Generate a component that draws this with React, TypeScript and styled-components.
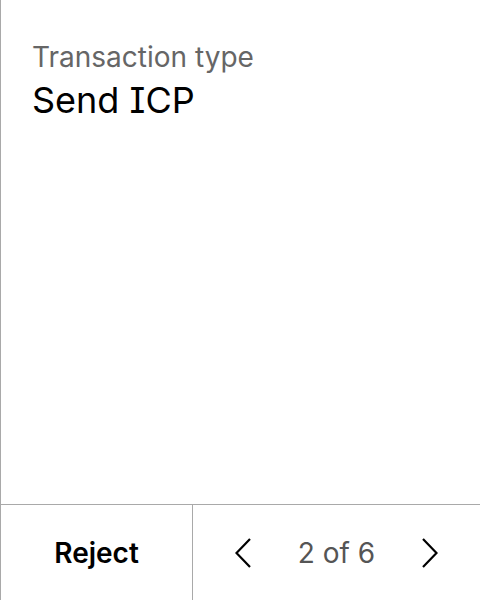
import React from "react";
import styled, { createGlobalStyle } from "styled-components";

const Global = createGlobalStyle`
  html, body { margin: 0; padding: 0; background: #fff; }
  body {
    font-family: Inter, "Noto Sans", sans-serif;
    font-optical-sizing: none;
    font-variation-settings: "opsz" 14;
    font-feature-settings: "cv08" 1;
  }
`;

const Frame = styled.div`
  width: 480px;
  height: 600px;
  box-sizing: border-box;
  border-left: 1px solid #a9a9a9;
  display: flex;
  flex-direction: column;
`;

const Body = styled.div`
  flex: 1;
  padding: 40px 0 0 31px;
  display: flex;
  flex-direction: column;
  gap: 4px;
`;

const Label = styled.div`
  font-size: 28px;
  color: #666;
  line-height: 34px;
`;

const Value = styled.div`
  font-size: 36px;
  color: #000;
  line-height: 44px;
`;

const Footer = styled.div`
  height: 96px;
  box-sizing: border-box;
  border-top: 1px solid #a9a9a9;
  display: grid;
  grid-template-columns: 192px 1fr;
`;

const RejectButton = styled.button`
  border: none;
  border-right: 1px solid #a9a9a9;
  background: none;
  font-family: inherit;
  font-size: 28px;
  font-weight: 600;
  color: #000;
  padding: 0;
`;

const Pager = styled.div`
  display: flex;
  align-items: center;
  justify-content: center;
  gap: 47px;
`;

const Arrow = styled.button`
  border: none;
  background: none;
  padding: 0;
  display: flex;
  align-items: center;
  justify-content: center;
`;

const Count = styled.span`
  font-size: 28px;
  color: #555;
  line-height: 34px;
`;

const Chevron = ({ dir }: { dir: "left" | "right" }) => (
  <svg width="16" height="30" viewBox="0 0 16 30" fill="none">
    <path
      d={dir === "left" ? "M15 1 L1.5 15 L15 29" : "M1 1 L14.5 15 L1 29"}
      stroke="#000"
      strokeWidth="2.2"
    />
  </svg>
);

export default function App() {
  return (
    <>
      <Global />
      <Frame>
        <Body>
          <Label>Transaction type</Label>
          <Value>Send ICP</Value>
        </Body>
        <Footer>
          <RejectButton>Reject</RejectButton>
          <Pager>
            <Arrow aria-label="Previous"><Chevron dir="left" /></Arrow>
            <Count>2 of 6</Count>
            <Arrow aria-label="Next"><Chevron dir="right" /></Arrow>
          </Pager>
        </Footer>
      </Frame>
    </>
  );
}
